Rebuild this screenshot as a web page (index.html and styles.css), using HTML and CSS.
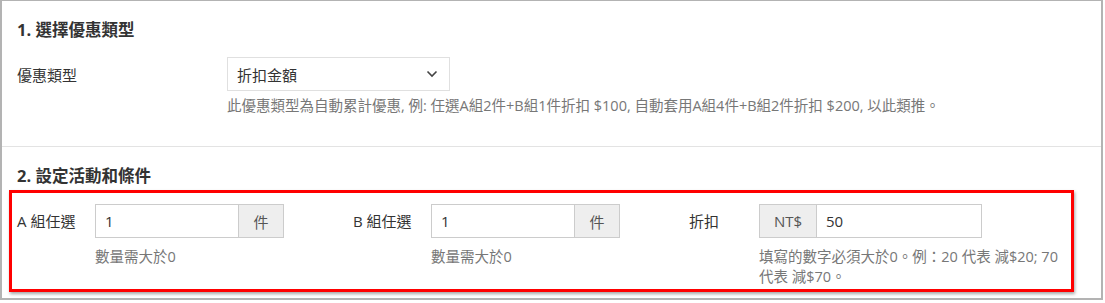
FILE: index.html
```
<!DOCTYPE html>
<html lang="zh-Hant">
<head>
    <meta charset="UTF-8">
    <meta name="viewport" content="width=device-width, initial-scale=1.0">
    <title>優惠設定</title>
    <link rel="stylesheet" href="styles.css">
</head>
<body>
    <div class="frame">
        <div class="section first">
            <h2>1. 選擇優惠類型</h2>
            <div class="form-row">
                <label class="row-label">優惠類型</label>
                <div class="row-field">
                    <div class="select-box">
                        <span>折扣金額</span>
                        <svg class="chevron" width="12" height="8" viewBox="0 0 12 8"><path d="M1.5 1.5 L6 6 L10.5 1.5" fill="none" stroke="#444" stroke-width="1.6"/></svg>
                    </div>
                    <p class="help">此優惠類型為自動累計優惠, 例: 任選A組2件+B組1件折扣 $100, 自動套用A組4件+B組2件折扣 $200, 以此類推。</p>
                </div>
            </div>
        </div>

        <div class="section second">
            <h2>2. 設定活動和條件</h2>
            <div class="highlight">
                <div class="col col-a">
                    <label class="col-label">A 組任選</label>
                    <div class="col-field">
                        <div class="input-group">
                            <input type="text" value="1">
                            <span class="addon">件</span>
                        </div>
                        <p class="help">數量需大於0</p>
                    </div>
                </div>
                <div class="col col-b">
                    <label class="col-label">B 組任選</label>
                    <div class="col-field">
                        <div class="input-group">
                            <input type="text" value="1">
                            <span class="addon">件</span>
                        </div>
                        <p class="help">數量需大於0</p>
                    </div>
                </div>
                <div class="col col-c">
                    <label class="col-label">折扣</label>
                    <div class="col-field">
                        <div class="input-group wide">
                            <span class="addon prefix">NT$</span>
                            <input type="text" value="50">
                        </div>
                        <p class="help">填寫的數字必須大於0。例：20 代表 減$20; 70 代表 減$70。</p>
                    </div>
                </div>
            </div>
        </div>
    </div>
</body>
</html>
```

FILE: styles.css
```
body {
    margin: 0;
    font-family: "Open Sans", "Noto Sans CJK TC", sans-serif;
    font-size: 15px;
    color: #333;
    background: #fff;
}
.frame {
    box-sizing: border-box;
    width: 1103px;
    height: 300px;
    border: 2px solid #b3b3b3;
    border-top-width: 1px;
    overflow: hidden;
}
h2 {
    margin: 0;
    font-size: 16.5px;
    line-height: 20px;
    font-weight: bold;
    color: #333;
}
.section {
    padding: 0 15px;
}
.section.first {
    padding-top: 19px;
    padding-bottom: 30px;
    border-bottom: 1px solid #e3e3e3;
}
.form-row {
    display: flex;
    margin-top: 17px;
}
.row-label {
    width: 210px;
    line-height: 20px;
    padding-top: 8px;
}
.select-box {
    box-sizing: border-box;
    width: 223px;
    height: 34px;
    border: 1px solid #e0e0e0;
    display: flex;
    align-items: center;
    justify-content: space-between;
    padding: 0 11px 0 9px;
}
.help {
    margin: 5px 0 0;
    font-size: 14.5px;
    line-height: 20px;
    color: #777;
}
.section.second {
    padding: 19px 0 0 7px;
}
.section.second h2 {
    padding-left: 8px;
}
.highlight {
    box-sizing: border-box;
    width: 1065px;
    height: 102px;
    margin-top: 4px;
    border: 3px solid #f00;
    box-shadow: 1px 2px 3px rgba(0, 0, 0, 0.35);
    padding: 11px 0 0 5px;
    display: flex;
}
.col {
    display: flex;
}
.col-a { width: 336px; }
.col-b { width: 336px; }
.col-c { flex: 1; }
.col-label {
    width: 78px;
    line-height: 20px;
    padding-top: 7px;
}
.col-c .col-label { width: 70px; }
.input-group {
    display: flex;
    width: 189px;
    height: 34px;
}
.input-group.wide {
    width: 223px;
}
.input-group input {
    box-sizing: border-box;
    flex: 1;
    min-width: 0;
    height: 34px;
    border: 1px solid #ccc;
    padding: 0 9px;
    font: inherit;
    color: #333;
    outline: none;
}
.addon {
    box-sizing: border-box;
    width: 45px;
    height: 34px;
    background: #eee;
    border: 1px solid #ccc;
    border-left: none;
    display: flex;
    align-items: center;
    justify-content: center;
    color: #555;
}
.addon.prefix {
    width: 57px;
    border-left: 1px solid #ccc;
    border-right: none;
}
.col-field .help {
    margin-top: 9px;
}
.col-c .help {
    width: 300px;
}
```
